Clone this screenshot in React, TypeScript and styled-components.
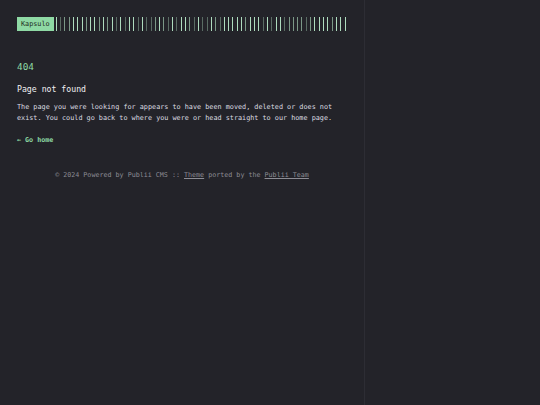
import styled, { createGlobalStyle } from "styled-components";

const GlobalStyle = createGlobalStyle`
  html, body {
    margin: 0;
    padding: 0;
    background: #232329;
  }
  body {
    font-family: "DejaVu Sans Mono", "Liberation Mono", monospace;
    color: #e6e6e8;
  }
`;

const Page = styled.div`
  display: grid;
  grid-template-columns: 365px 1fr;
  height: 405px;
  background: #232329;
`;

const Main = styled.main`
  border-right: 1px solid #2d2d34;
  padding: 17px 17px 0 17px;
  display: flex;
  flex-direction: column;
`;

const Aside = styled.aside`
  background: #232329;
`;

const Header = styled.header`
  display: flex;
  align-items: stretch;
  height: 14px;
  gap: 2px;
`;

const Logo = styled.a`
  background: #8ed9a4;
  color: #1f2a22;
  font-size: 6.8px;
  padding: 0 4px;
  display: flex;
  align-items: center;
  text-decoration: none;
`;

const Bars = styled.div`
  display: flex;
  justify-content: space-between;
  width: 290px;
`;

const Bar = styled.span<{ $level: number }>`
  width: 1px;
  background: #b6e6c6;
  opacity: ${(p) => p.$level};
`;

const Code = styled.h1`
  margin: 30px 0 0 0;
  font-size: 9.4px;
  font-weight: normal;
  color: #8ed9a4;
  line-height: 12px;
`;

const Title = styled.h2`
  margin: 10px 0 0 0;
  font-size: 8.2px;
  font-weight: normal;
  line-height: 12px;
  color: #f0f0f2;
`;

const Text = styled.p`
  margin: 7px 0 0 0;
  font-size: 6.8px;
  line-height: 11px;
  color: #dcdce0;
`;

const Back = styled.a`
  margin-top: 11px;
  font-size: 6.7px;
  font-weight: bold;
  color: #8ed9a4;
  text-decoration: none;
  line-height: 11px;
`;

const Footer = styled.footer`
  margin-top: 24px;
  text-align: center;
  font-size: 6.7px;
  line-height: 11px;
  color: #8c8c94;
`;

const FootLink = styled.a`
  color: #8c8c94;
  text-decoration: underline;
`;

const levels = Array.from({ length: 68 }, (_, i) => {
  const v = Math.abs(Math.sin(i * 12.9898 + 3.7) * 43758.5453) % 1;
  return v > 0.55 ? 0.95 : v > 0.25 ? 0.6 : 0.38;
});

export default function App() {
  return (
    <>
      <GlobalStyle />
      <Page>
        <Main>
          <Header>
            <Logo href="#">Kapsulo</Logo>
            <Bars>
              {levels.map((l, i) => (
                <Bar key={i} $level={l} />
              ))}
            </Bars>
          </Header>
          <Code>404</Code>
          <Title>Page not found</Title>
          <Text>
            The page you were looking for appears to have been moved, deleted or does not
            exist. You could go back to where you were or head straight to our home page.
          </Text>
          <Back href="#">← Go home</Back>
          <Footer>
            © 2024 Powered by Publii CMS :: <FootLink href="#">Theme</FootLink> ported by the{" "}
            <FootLink href="#">Publii Team</FootLink>
          </Footer>
        </Main>
        <Aside />
      </Page>
    </>
  );
}
